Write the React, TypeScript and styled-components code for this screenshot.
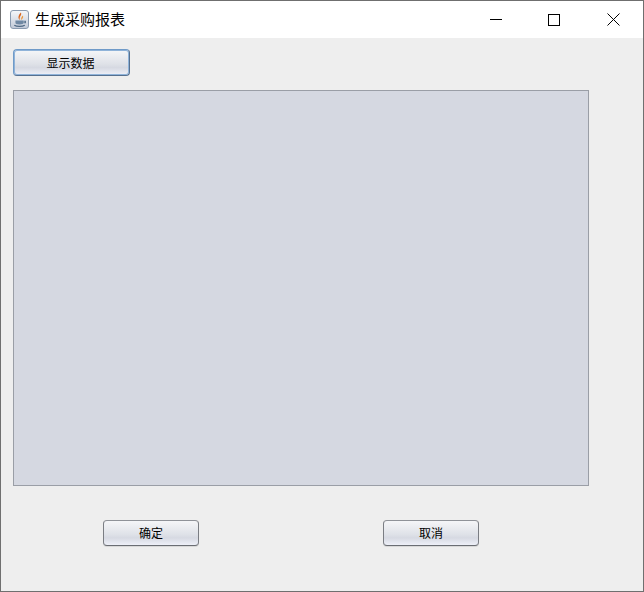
import React from 'react';
import styled, { createGlobalStyle } from 'styled-components';

const GlobalStyle = createGlobalStyle`
  html, body {
    margin: 0;
    padding: 0;
    background: #eeeeee;
  }
`;

const Frame = styled.div`
  width: 644px;
  height: 592px;
  box-sizing: border-box;
  border: 1px solid #6f6f6f;
  background: #eeeeee;
  display: flex;
  flex-direction: column;
  font-family: "Noto Sans CJK SC", "Liberation Sans", sans-serif;
  color: #000;
`;

const TitleBar = styled.div`
  height: 37px;
  flex: none;
  background: #fff;
  display: flex;
  align-items: center;
  padding-left: 9px;
`;

const AppIcon = styled.div`
  width: 19px;
  height: 19px;
  box-sizing: border-box;
  border: 1px solid #8a9bb0;
  border-radius: 3px;
  background: linear-gradient(#f4f6f9, #c2cad8);
  display: flex;
  align-items: center;
  justify-content: center;
`;

const Title = styled.div`
  margin-left: 6px;
  padding-bottom: 1px;
  font-size: 15px;
  line-height: 20px;
  flex: 1;
`;

const WindowButton = styled.div<{ $close?: boolean }>`
  width: ${(p) => (p.$close ? 60 : 58)}px;
  height: 37px;
  display: flex;
  align-items: center;
  justify-content: center;
`;

const Content = styled.div`
  flex: 1;
  display: flex;
  flex-direction: column;
  padding: 11px 0 0 12px;
`;

const Button = styled.button<{ $focused?: boolean; $width: number }>`
  width: ${(p) => p.$width}px;
  height: ${(p) => (p.$focused ? 27 : 26)}px;
  box-sizing: border-box;
  padding: ${(p) => (p.$focused ? '0 2px 0 0' : '0')};
  border: 1px solid;
  border-color: ${(p) => (p.$focused ? '#6f9ac8 #56708f #56708f #6f9ac8' : '#8f9298 #7a7d83 #6a6d73')};
  border-radius: 4px;
  background: linear-gradient(#f5f6f8 0%, #dfe2e8 55%, #d6d9e2 70%, #eef0f8 100%);
  font-family: inherit;
  font-size: 12px;
  line-height: 24px;
  color: #000;
  box-shadow: ${(p) => (p.$focused ? 'inset 0 0 0 1px #8fb3d9' : '0 1px 0 #d8d8d8')};
`;

const DataPanel = styled.div`
  width: 576px;
  height: 396px;
  box-sizing: border-box;
  margin-top: 14px;
  border: 1px solid #9a9ea6;
  background: #d5d8e1;
`;

const Footer = styled.div`
  display: flex;
  margin-top: 34px;
  padding-left: 90px;
  gap: 184px;
`;

function JavaIcon() {
  return (
    <svg width="16" height="16" viewBox="0 0 14 14" fill="none">
      <path d="M7.8 0.5C9 3 5.8 4 7 7C4.8 5.5 5.5 3 7.8 0.5Z" fill="#d9661f" />
      <path d="M9.6 3C8.2 4.2 7.6 5.6 8.2 7C9.2 5.8 10.2 4.8 9.6 3Z" fill="#ec9a3e" />
      <path d="M3 7.5H10V9.5C10 10.3 9 10.9 6.5 10.9C4 10.9 3 10.3 3 9.5Z" fill="#6f88a3" />
      <path d="M10 8H11.8V9.5H10" stroke="#5f7892" strokeWidth="0.9" />
      <path d="M2 11.6C4.2 13 9 13 11.2 11.6" stroke="#4f6984" strokeWidth="1.1" />
    </svg>
  );
}

export default function App() {
  return (
    <>
      <GlobalStyle />
      <Frame>
        <TitleBar>
          <AppIcon>
            <JavaIcon />
          </AppIcon>
          <Title>生成采购报表</Title>
          <WindowButton>
            <svg width="12" height="12" viewBox="0 0 12 12">
              <path d="M0 5.5H12" stroke="#000" strokeWidth="1" />
            </svg>
          </WindowButton>
          <WindowButton>
            <svg width="12" height="12" viewBox="0 0 12 12" fill="none">
              <rect x="0.5" y="0.5" width="11" height="11" stroke="#000" strokeWidth="1" />
            </svg>
          </WindowButton>
          <WindowButton $close>
            <svg width="13" height="13" viewBox="0 0 13 13" fill="none">
              <path d="M0.5 0.5L12.5 12.5M12.5 0.5L0.5 12.5" stroke="#000" strokeWidth="1" />
            </svg>
          </WindowButton>
        </TitleBar>
        <Content>
          <Button $focused $width={117}>显示数据</Button>
          <DataPanel />
          <Footer>
            <Button $width={96}>确定</Button>
            <Button $width={96}>取消</Button>
          </Footer>
        </Content>
      </Frame>
    </>
  );
}
